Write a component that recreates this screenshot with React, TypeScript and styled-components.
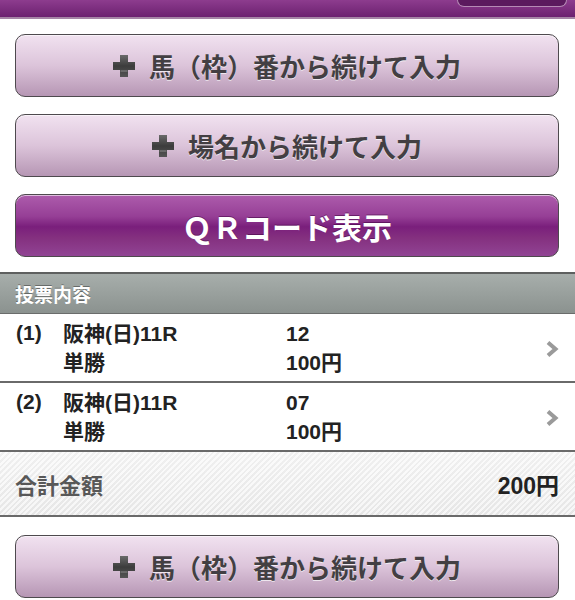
import React from 'react'
import { styled, createGlobalStyle } from 'styled-components'

//Types
type Bet = {
    no: number,
    race: string,
    kind: string,
    horse: string,
    amount: string,
}

const bets: Bet[] = [
    { no: 1, race: '阪神(日)11R', kind: '単勝', horse: '12', amount: '100円' },
    { no: 2, race: '阪神(日)11R', kind: '単勝', horse: '07', amount: '100円' },
]

//Styles
const GlobalStyle = createGlobalStyle`
    body {
        margin: 0;
        background: #fff;
        font-family: "Liberation Sans", "Noto Sans CJK JP", sans-serif;
    }
`;

const Page = styled.div`
    width: 575px;
    display: flex;
    flex-direction: column;
`;

const TopBar = styled.div`
    height: 17px;
    display: flex;
    justify-content: flex-end;
    align-items: flex-start;
    padding-right: 8px;
    background: linear-gradient(#8d3c8e, #6c2170);
    border-bottom: 2px solid #a585a6;
`;

const TopButton = styled.div`
    width: 108px;
    height: 6px;
    background: #5b1a5e;
    border: 1px solid #b58ab5;
    border-top: none;
    border-radius: 0 0 8px 8px;
`;

const ButtonGroup = styled.div<{ $top: number, $bottom: number }>`
    display: flex;
    flex-direction: column;
    gap: 17px;
    padding: ${p => p.$top}px 16px ${p => p.$bottom}px 15px;
`;

const Button = styled.div<{ $primary?: boolean }>`
    height: 61px;
    display: flex;
    align-items: center;
    justify-content: center;
    gap: 14px;
    border: 1px solid #4e4a4e;
    border-radius: 10px;
    box-shadow: inset 0 1px 0 rgba(255, 255, 255, 0.6);
    font-family: "Noto Sans CJK JP", sans-serif;
    font-weight: bold;
    font-size: ${p => p.$primary ? 30 : 26}px;
    color: ${p => p.$primary ? '#fff' : '#433f43'};
    text-shadow: ${p => p.$primary ? '0 -1px 0 rgba(60,0,60,0.5)' : '0 1px 0 rgba(255,255,255,0.7)'};
    background: ${p => p.$primary
        ? 'linear-gradient(#ad5cac 0%, #963f96 35%, #7a1f7c 52%, #84307f 70%, #914494 100%)'
        : 'linear-gradient(#f1e2f0 0%, #dcc4da 50%, #b696b4 100%)'};
`;

const SectionHeader = styled.div`
    height: 39px;
    display: flex;
    align-items: center;
    padding-left: 15px;
    border-top: 2px solid #5e605f;
    border-bottom: 1px solid #6a6c6b;
    background: linear-gradient(#a7aeab, #8b928f);
    color: #fff;
    font-weight: bold;
    font-size: 19px;
    text-shadow: 0 -1px 0 rgba(0, 0, 0, 0.35);
`;

const Row = styled.div`
    height: 67px;
    display: grid;
    grid-template-columns: 47px 223px 1fr 30px;
    align-items: center;
    padding-left: 16px;
    border-bottom: 2px solid #6a6a6a;
    box-shadow: 0 1px 0 #e8e8e8;
    background: #fff;
    font-weight: bold;
    font-size: 21px;
    color: #222;
    line-height: 29px;
`;

const Cell = styled.div`
    display: flex;
    flex-direction: column;
    align-self: center;
`;

const Number = styled.div`
    align-self: start;
    padding-top: 4px;
`;

const Arrow = styled.div`
    display: flex;
    align-items: center;
    padding-top: 3px;
`;

const Total = styled.div`
    height: 63px;
    display: flex;
    align-items: center;
    justify-content: space-between;
    padding: 0 16px 0 15px;
    border-bottom: 2px solid #6a6a6a;
    background:
        repeating-linear-gradient(135deg, rgba(255,255,255,0.55) 0 2px, rgba(0,0,0,0.025) 2px 4px),
        linear-gradient(#f6f6f6, #ececec);
    font-weight: bold;
`;

const TotalLabel = styled.span`
    font-family: "Noto Sans CJK JP", sans-serif;
    font-size: 22px;
    color: #585858;
`;

const TotalValue = styled.span`
    font-size: 23px;
    color: #222;
`;

//Icons
const Plus = () => (
    <svg width="22" height="22" viewBox="0 0 22 22">
        <defs>
            <linearGradient id="plusGrad" x1="0" y1="0" x2="0" y2="1">
                <stop offset="0" stopColor="#6a6a6a" />
                <stop offset="0.5" stopColor="#3c3c3c" />
                <stop offset="1" stopColor="#555" />
            </linearGradient>
        </defs>
        <path d="M7 0h8v7h7v8h-7v7h-8v-7h-7v-8h7z" fill="url(#plusGrad)" />
        <path d="M7.5 15.5h7v1h-7z" fill="#bbb" opacity="0.6" />
    </svg>
)

const Chevron = () => (
    <svg width="14" height="18" viewBox="0 0 14 18">
        <polyline points="3,2.5 10.5,9 3,15.5" fill="none" stroke="#9a9a9a" strokeWidth="4" />
    </svg>
)

const App = () => {
    return (
        <Page>
            <GlobalStyle />
            <TopBar>
                <TopButton />
            </TopBar>
            <ButtonGroup $top={15} $bottom={15}>
                <Button><Plus />馬（枠）番から続けて入力</Button>
                <Button><Plus />場名から続けて入力</Button>
                <Button $primary>ＱＲコード表示</Button>
            </ButtonGroup>
            <SectionHeader>投票内容</SectionHeader>
            {bets.map(bet => (
                <Row key={bet.no}>
                    <Number>({bet.no})</Number>
                    <Cell>
                        <span>{bet.race}</span>
                        <span>{bet.kind}</span>
                    </Cell>
                    <Cell>
                        <span>{bet.horse}</span>
                        <span>{bet.amount}</span>
                    </Cell>
                    <Arrow><Chevron /></Arrow>
                </Row>
            ))}
            <Total>
                <TotalLabel>合計金額</TotalLabel>
                <TotalValue>200円</TotalValue>
            </Total>
            <ButtonGroup $top={18} $bottom={10}>
                <Button><Plus />馬（枠）番から続けて入力</Button>
            </ButtonGroup>
        </Page>
    )
}

export default App;
